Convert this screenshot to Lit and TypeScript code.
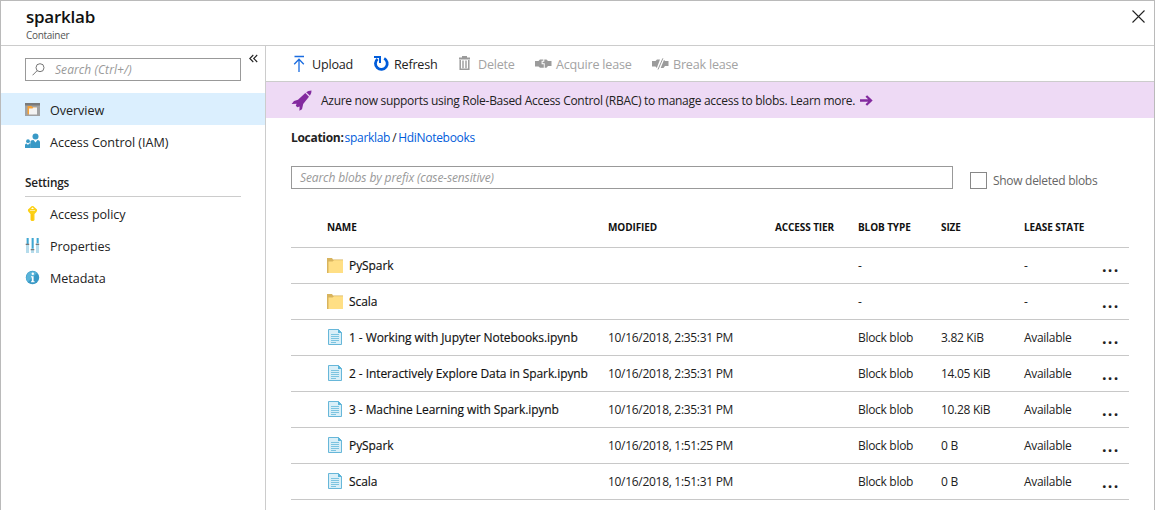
import { LitElement, html, css, svg, nothing } from "lit";
import { customElement, property } from "lit/decorators.js";

const icons: Record<string, unknown> = {
  overview: svg`<svg width="16" height="16" viewBox="0 0 16 16"><path fill="#a0a1a2" d="M0 2h15v13H0z"/><path fill="#7a7a7a" d="M0 2h15v2.500H0z"/><path fill="#f9a336" d="M2.500 5h4l1 1.300H11v2H4.500v5h-2z"/><path fill="#f3f3f3" d="M4 7.500h3.500l.8-1H12v7H4z"/></svg>`,
  iam: svg`<svg width="16" height="16" viewBox="0 0 16 16"><g fill="#3999c6"><circle cx="10.500" cy="3.600" r="3"/><path d="M5.500 8q1-1 3-1l2 2.500 2-2.500Q15 7 15 9.500V15H5.500z"/><circle cx="3" cy="8.200" r="1.900"/><path d="M0 15v-3q0-1.500 1.600-1.500L3 12l1-1.500h1.800V15z"/></g><path fill="#fff" d="m9.300 7 1.200 1.600L11.700 7z"/></svg>`,
  key: svg`<svg width="16" height="16" viewBox="0 0 16 16"><path fill="#fcd116" d="M7.500 0q1 0 2 1.200L12 3.600q.5 1.400-.6 2.400L9.500 8v6l-1 1h-2l-1-1.100V8L3.600 6Q2.500 5 3 3.600l2.500-2.400Q6.500 0 7.500 0z"/><path fill="#ff9f00" opacity=".4" d="M6.500 8h1v6.500h-1z"/><path fill="#fff" d="M7.500 1.300 9 3H6z"/><path fill="#fff" opacity=".7" d="M5 4.200h5v.8H5z"/></svg>`,
  sliders: svg`<svg width="16" height="16" viewBox="0 0 16 16"><g fill="#b5dcec"><path d="M1 0h3v15H1zM6 0h3v15H6zM11 0h3v15h-3z"/></g><path fill="#3fa7d3" d="M2 0h1.500v6H2zM7 0h1.500v10.500H7zM12 0h1.500v5H12z"/><g fill="#7a7a7a"><path d="M.7 5.700h3.500V7H.7zM5.700 11h3.600v1.200H5.700zM10.700 5.700h3.500V7h-3.500z"/></g></svg>`,
  info: svg`<svg width="16" height="16" viewBox="0 0 16 16"><circle cx="7.500" cy="7.500" r="6.700" fill="#3999c6"/><path fill="#59b4d9" d="M2.800 12.300A6.700 6.700 0 0 1 12.200 2.800z"/><g fill="#fff"><circle cx="7.800" cy="3.800" r="1.200"/><path d="M6 6.200h2.600v5h1v1H6v-1h.8v-4H6z"/></g></svg>`,
  upload: svg`<svg width="16" height="18" viewBox="0 0 16 18"><path fill="none" stroke="#1a6ce0" stroke-width="1.300" d="M3.500 1.500h9.500M8 17V4.500M3.200 9.200 8 4.300l4.800 4.900"/></svg>`,
  refresh: svg`<svg width="17" height="18" viewBox="0 0 17 18"><path fill="none" stroke="#015cda" stroke-width="2.800" d="M11.200 3.400a5.900 5.900 0 1 1-6.600.6"/><path fill="#015cda" d="M1 1h7v7H6V3H1z"/></svg>`,
  trash: svg`<svg width="14" height="16" viewBox="0 0 14 16"><path fill="#9b9b9b" d="M5 0h5v1.500h3V3.500H2v-2h3z"/><path fill="none" stroke="#9b9b9b" stroke-width="1.500" d="M3.200 4v9.200h8.600V4"/><path stroke="#9b9b9b" stroke-width="1.400" d="M6 4.500v7.800M9 4.500v7.800"/></svg>`,
  acquire: svg`<svg width="17" height="12" viewBox="0 0 17 12"><path fill="#9b9b9b" d="M0 3h3.500L5 1.500h3.300v1.300H6.600v3.400h2.200v3.600H5L3.500 8.500H0zM9.300 1.500h2.200L13 3h3.500v5H13l-1.500 1.800H9.700V5.200H7.600V3.700h1.700z"/></svg>`,
  broken: svg`<svg width="17" height="12" viewBox="0 0 17 12"><path fill="#9b9b9b" d="M0 3h3.500L5 1.500h3L4.800 10 3.500 8.500H0zM13 3h3.500v5H13l-1.500 2H8.700L12 1.700z"/><path stroke="#9b9b9b" d="M10.900.3 6 11.500"/></svg>`,
  rocket: svg`<svg width="21" height="21" viewBox="0 0 21 21"><path fill="#832a9f" d="M20.500.5q.2 3-1.600 5.300l-3.700-3.600Q17 .6 20.500.5zM14.300 3.100l3.700 3.600-5.800 7.400-1.200 5.100-2.600 1.600.2-4.200-2.300.7-1.500-1.500.8-2.100-5 .2L3 11l4-1.300z"/></svg>`,
  arrow: svg`<svg width="13" height="11" viewBox="0 0 13 11"><path fill="none" stroke="#832a9f" stroke-width="2.300" d="M0 5.500h11M6.300 1 11 5.500 6.300 10"/></svg>`,
  folder: svg`<svg width="17" height="16" viewBox="0 0 17 16"><path fill="#d8b45e" d="M0 0h5l1 1.500h10V15H0z"/><path fill="#ffdf85" d="M1.500 3.500h4L7 2.300h9V15H1.500z"/></svg>`,
  file: svg`<svg width="16" height="17" viewBox="0 0 16 17"><path fill="#d9eff8" stroke="#67b7d9" d="M1.500.5h10l3 3v12h-13z"/><path fill="#59b4d9" d="M11 0v4h4z"/><path stroke="#7cc4e0" d="M4 5.500h8M4 7.500h8M4 9.500h8M4 11.500h8M4 13.500h5"/></svg>`,
  search: svg`<svg width="13" height="13" viewBox="0 0 13 13"><g fill="none" stroke="#777"><circle cx="8" cy="4.700" r="4"/><path d="M5.200 7.600.5 12.300"/></g></svg>`,
  close: svg`<svg width="13" height="13" viewBox="0 0 13 13"><path stroke="#222" stroke-width="1.100" d="m.5.500 12 12M12.500.5l-12 12"/></svg>`,
  collapse: svg`<svg width="9" height="9" viewBox="0 0 9 9"><path fill="none" stroke="#222" stroke-width="1.100" d="M4.300 1 .8 4.500 4.300 8M8.200 1 4.700 4.500 8.200 8"/></svg>`,
};

const rows = [
  ["folder", "PySpark", "", "-", "", "-"],
  ["folder", "Scala", "", "-", "", "-"],
  ["file", "1 - Working with Jupyter Notebooks.ipynb", "10/16/2018, 2:35:31 PM", "Block blob", "3.82 KiB", "Available"],
  ["file", "2 - Interactively Explore Data in Spark.ipynb", "10/16/2018, 2:35:31 PM", "Block blob", "14.05 KiB", "Available"],
  ["file", "3 - Machine Learning with Spark.ipynb", "10/16/2018, 2:35:31 PM", "Block blob", "10.28 KiB", "Available"],
  ["file", "PySpark", "10/16/2018, 1:51:25 PM", "Block blob", "0 B", "Available"],
  ["file", "Scala", "10/16/2018, 1:51:31 PM", "Block blob", "0 B", "Available"],
];

@customElement("nav-item")
class NavItem extends LitElement {
  @property() icon = "";
  @property() label = "";
  @property({ type: Boolean }) active = false;
  static styles = css`
    :host { display: flex; align-items: center; height: 32px; padding-left: 24px; }
    :host([active]) { background: #dbeffe; }
    .icon { display: flex; width: 25px; }
    .label { font-size: 12.6px; line-height: 18px; letter-spacing: -0.06px; padding-top: var(--label-top, 2px); }
  `;
  render() {
    return html`<span class="icon">${icons[this.icon]}</span><span class="label">${this.label}</span>`;
  }
}

@customElement("tool-button")
class ToolButton extends LitElement {
  @property() icon = "";
  @property() label = "";
  @property({ type: Boolean }) disabled = false;
  static styles = css`
    :host { display: flex; align-items: center; height: 35px; box-sizing: border-box; white-space: nowrap; }
    :host([disabled]) { color: #a3a3a3; }
    .icon { display: flex; width: 21px; flex: none; }
    .label { font-size: 12.6px; line-height: 18px; padding-top: 2px; letter-spacing: -0.22px; }
  `;
  render() {
    return html`<span class="icon">${icons[this.icon]}</span><span class="label">${this.label}</span>`;
  }
}

@customElement("app-root")
class AppRoot extends LitElement {
  static styles = css`
    * { box-sizing: border-box; }
    :host {
      display: flex; flex-direction: column; width: 1155px; height: 510px; overflow: hidden;
      box-sizing: border-box; border: 1px solid #bababa; border-bottom: 0; background: #fff;
      font-family: "Open Sans", "Noto Sans", sans-serif; font-size: 12px; color: #222;
    }
    .header { display: flex; justify-content: space-between; height: 45px; flex: none; border-bottom: 1px solid #ccc; padding: 4px 9px 0 25px; }
    .title { font-size: 17px; font-weight: 600; line-height: 23px; color: #111; letter-spacing: -0.25px; }
    .subtitle { font-size: 10px; line-height: 14px; color: #555; letter-spacing: -0.3px; }
    .close { padding-top: 5px; }
    .body { display: flex; flex: 1; min-height: 0; }
    .side { width: 265px; flex: none; border-right: 1px solid #ccc; }
    .side-top { display: flex; height: 47px; padding: 12px 0 0 24px; gap: 8px; }
    .search { display: flex; align-items: center; width: 216px; height: 23px; border: 1px solid #999; padding-left: 6px; gap: 10px; }
    .collapse { display: flex; margin-top: -4px; }
    .hint { font-style: italic; color: #999; font-size: 12px; line-height: 18px; letter-spacing: -0.12px; }
    .search .hint { letter-spacing: 0.07px; }
    .top-links { --label-top: 4px; }
    .settings { margin: 16px 24px 1px 24px; height: 24px; border-bottom: 1px solid #ccc; font-weight: 600; font-size: 11.800px; line-height: 18px; letter-spacing: -0.2px; }
    .main { flex: 1; min-width: 0; }
    .toolbar { display: flex; height: 36px; border-bottom: 1px solid #ccc; padding-left: 25px; }
    .upload { width: 82px; }
    .refresh { width: 84px; }
    .delete { width: 78px; }
    .acquire { width: 117px; }
    .banner { display: flex; align-items: center; height: 36px; background: #eedaf5; padding-left: 25px; }
    .rocket { display: flex; width: 30px; }
    .banner-text { font-size: 12px; line-height: 18px; padding-top: 2px; margin-right: 5px; white-space: nowrap; letter-spacing: -0.285px; }
    .content { padding: 11px 25px 0 25px; }
    .location { display: flex; height: 37px; line-height: 18px; white-space: nowrap; letter-spacing: -0.3px; }
    .location b { font-weight: 700; margin-right: 1px; }
    .slash { margin: 0 2px; }
    .link { color: #015cda; }
    .filters { display: flex; gap: 17px; }
    .blob-search { width: 662px; height: 23px; border: 1px solid #999; padding: 2px 0 0 8px; }
    .check { display: flex; gap: 6px; padding-top: 6px; color: #666; line-height: 18px; letter-spacing: -0.29px; }
    .box { width: 17px; height: 17px; border: 1px solid #888; }
    .row { display: grid; grid-template-columns: 22px 259px 167px 83px 83px 83px 78px 27px; width: 838px; height: 36px; align-items: center; padding-left: 36px; border-bottom: 1px solid #c8c8c8; white-space: nowrap; font-size: 12px; line-height: 18px; letter-spacing: -0.3px; }
    .head { margin-top: 17px; height: 41px; font-size: 10px; font-weight: 700; color: #111; letter-spacing: -0.1px; }
    .head-name { grid-column: 1 / 3; }
    .row svg { display: block; }
    .name { font-size: 12px; color: #111; letter-spacing: -0.08px; -webkit-text-stroke: 0.15px #111; }
    .dots { font-size: 16px; font-weight: 700; letter-spacing: 1.300px; color: #222; }
  `;
  render() {
    return html`
      <div class="header">
        <div><div class="title">sparklab</div><div class="subtitle">Container</div></div>
        <div class="close">${icons.close}</div>
      </div>
      <div class="body">
        <div class="side">
          <div class="side-top">
            <div class="search">${icons.search}<span class="hint">Search (Ctrl+/)</span></div>
            <div class="collapse">${icons.collapse}</div>
          </div>
          <div class="top-links">
            <nav-item active icon="overview" label="Overview"></nav-item>
            <nav-item icon="iam" label="Access Control (IAM)"></nav-item>
          </div>
          <div class="settings">Settings</div>
          <nav-item icon="key" label="Access policy"></nav-item>
          <nav-item icon="sliders" label="Properties"></nav-item>
          <nav-item icon="info" label="Metadata"></nav-item>
        </div>
        <div class="main">
          <div class="toolbar">
            <tool-button class="upload" icon="upload" label="Upload"></tool-button>
            <tool-button class="refresh" icon="refresh" label="Refresh"></tool-button>
            <tool-button class="delete" disabled icon="trash" label="Delete"></tool-button>
            <tool-button class="acquire" disabled icon="acquire" label="Acquire lease"></tool-button>
            <tool-button disabled icon="broken" label="Break lease"></tool-button>
          </div>
          <div class="banner">
            <span class="rocket">${icons.rocket}</span>
            <span class="banner-text">Azure now supports using Role-Based Access Control (RBAC) to manage access to blobs. Learn more.</span>
            ${icons.arrow}
          </div>
          <div class="content">
            <div class="location"><b>Location:</b><span class="link">sparklab</span><span class="slash">/</span><span class="link">HdiNotebooks</span></div>
            <div class="filters">
              <div class="blob-search hint">Search blobs by prefix (case-sensitive)</div>
              <div class="check"><span class="box"></span><span>Show deleted blobs</span></div>
            </div>
            <div class="row head">
              <span class="head-name">NAME</span><span>MODIFIED</span><span>ACCESS TIER</span><span>BLOB TYPE</span><span>SIZE</span><span>LEASE STATE</span>
            </div>
            ${rows.map(([icon, name, modified, type, size, lease]) => html`
              <div class="row">
                ${icons[icon]}<span class="name">${name}</span><span>${modified || nothing}</span><span></span><span>${type}</span><span>${size}</span><span>${lease}</span><span class="dots">...</span>
              </div>`)}
          </div>
        </div>
      </div>`;
  }
}
